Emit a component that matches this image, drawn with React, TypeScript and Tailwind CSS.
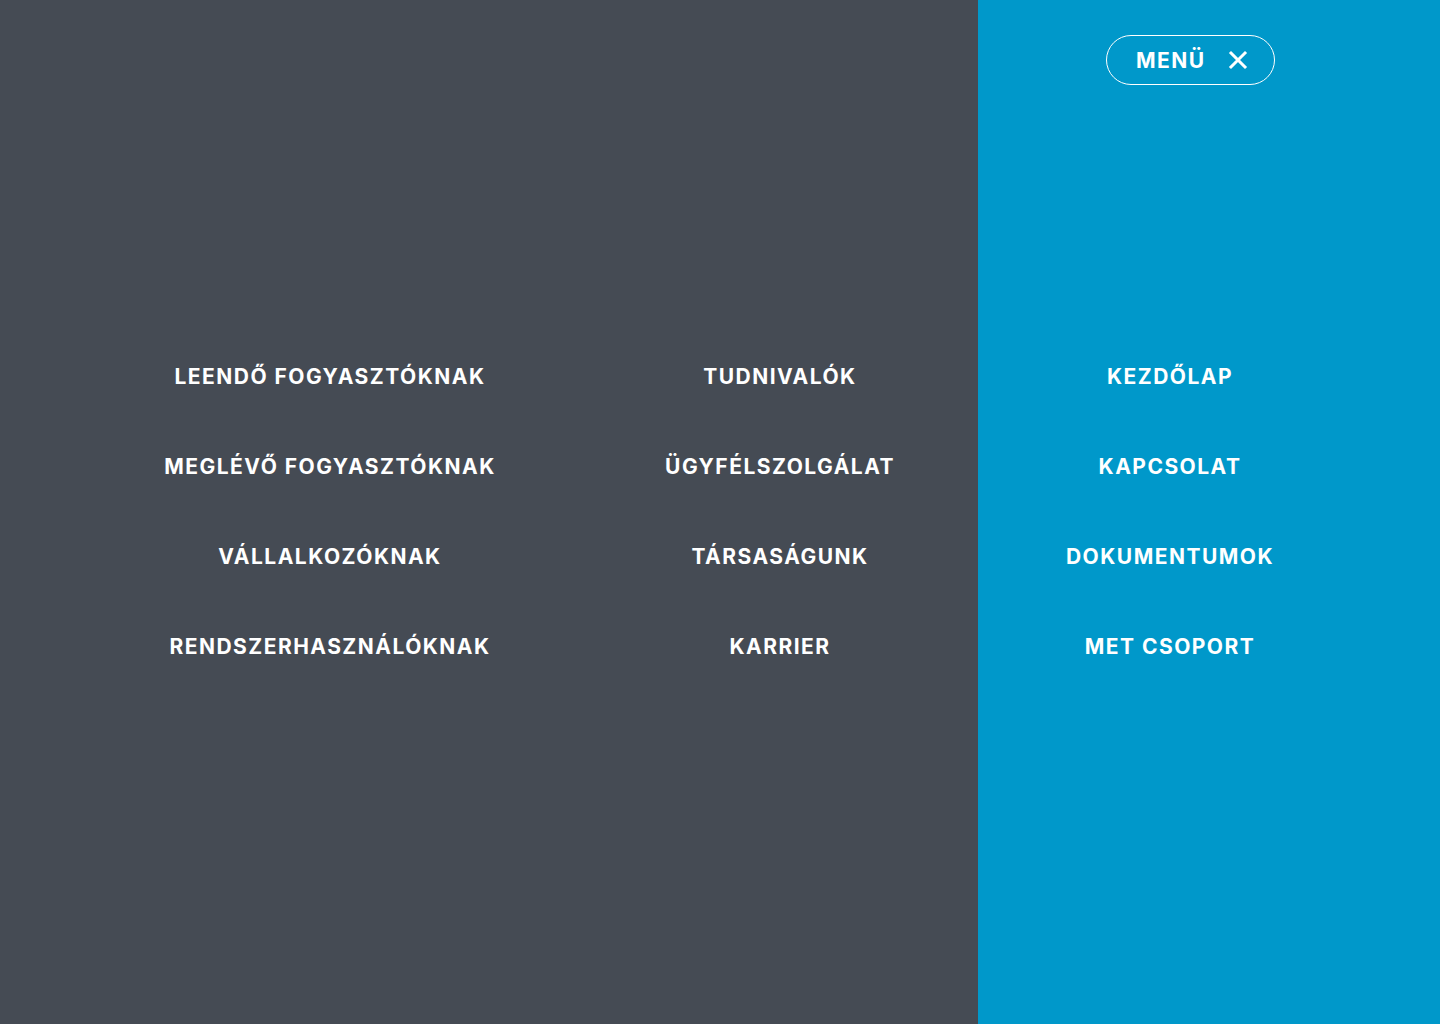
import React from 'react';

const left = ['LEENDŐ FOGYASZTÓKNAK', 'MEGLÉVŐ FOGYASZTÓKNAK', 'VÁLLALKOZÓKNAK', 'RENDSZERHASZNÁLÓKNAK'];
const middle = ['TUDNIVALÓK', 'ÜGYFÉLSZOLGÁLAT', 'TÁRSASÁGUNK', 'KARRIER'];
const right = ['KEZDŐLAP', 'KAPCSOLAT', 'DOKUMENTUMOK', 'MET CSOPORT'];

const MenuColumn = ({ items, width }: { items: string[]; width: string }) => (
  <ul className={`${width} flex flex-col`}>
    {items.map((item) => (
      <li key={item} className="h-[90px] flex items-center justify-center">
        <a href="#" className="text-white text-[21px] font-bold tracking-[0.07em] leading-none">
          {item}
        </a>
      </li>
    ))}
  </ul>
);

const App: React.FC = () => {
  return (
    <div className="h-screen w-full flex overflow-hidden" style={{ fontFamily: 'Inter, "Open Sans", sans-serif' }}>
      {/* Dark side */}
      <div className="w-[978px] h-full bg-[#454b54] flex pl-[105px] pt-[331px]">
        <MenuColumn items={left} width="w-[450px]" />
        <div className="w-[30px]" />
        <MenuColumn items={middle} width="w-[390px]" />
      </div>

      {/* Blue side */}
      <div className="flex-1 h-full bg-[#0098ca] flex flex-col pt-[35px]">
        <div className="flex justify-end pr-[165px]">
          <button className="h-[50px] w-[169px] rounded-full border border-white flex items-center pl-[29px] gap-[22px] text-white">
            <span className="text-[21px] font-bold leading-none tracking-[0.07em]">MENÜ</span>
            <svg width="20" height="20" viewBox="0 0 20 20" fill="none" stroke="white" strokeWidth="3" strokeLinecap="square">
              <path d="M3 3L17 17M17 3L3 17" />
            </svg>
          </button>
        </div>
        <div className="mt-[246px]">
          <MenuColumn items={right} width="w-[384px]" />
        </div>
      </div>
    </div>
  );
};

export default App;
